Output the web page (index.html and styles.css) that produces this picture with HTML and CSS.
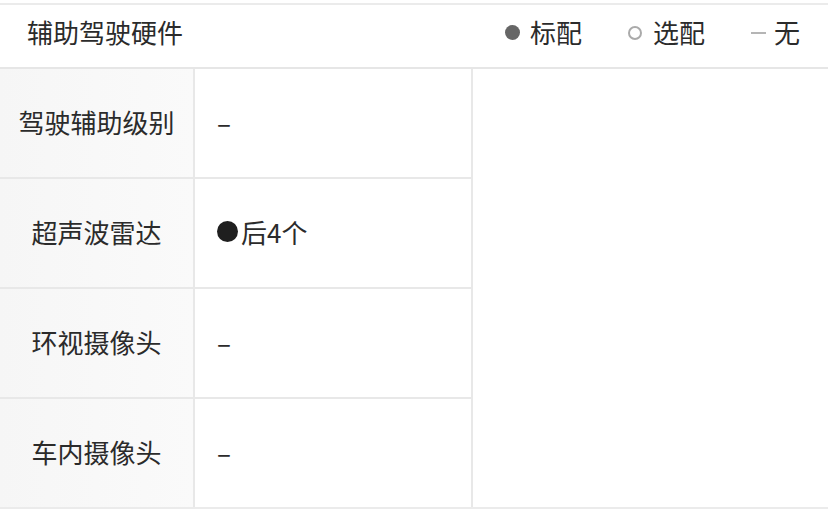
FILE: index.html
```html
<!DOCTYPE html>
<html lang="zh">
<head>
<meta charset="utf-8">
<link rel="stylesheet" href="styles.css">
</head>
<body>
<div class="page">
  <div class="header">
    <div class="title">辅助驾驶硬件</div>
    <div class="legend">
      <span class="item"><span class="dot-std"></span>标配</span>
      <span class="item"><span class="dot-opt"></span>选配</span>
      <span class="item"><span class="dash-none"></span>无</span>
    </div>
  </div>
  <div class="body">
    <div class="table">
      <div class="row"><div class="label">驾驶辅助级别</div><div class="value">–</div></div>
      <div class="row"><div class="label">超声波雷达</div><div class="value"><span class="bullet"></span>后4个</div></div>
      <div class="row"><div class="label">环视摄像头</div><div class="value">–</div></div>
      <div class="row last"><div class="label">车内摄像头</div><div class="value">–</div></div>
    </div>
  </div>
</div>
</body>
</html>
```

FILE: styles.css
```css
html, body {
  margin: 0;
  padding: 0;
  background: #fff;
}
body {
  font-family: "Noto Sans CJK SC", "Noto Sans", sans-serif;
  color: #2b2b2b;
  width: 828px;
  height: 518px;
  overflow: hidden;
}
.page {
  padding-top: 3px;
}
.header {
  border-top: 2px solid #ebebeb;
  border-bottom: 2px solid #e6e6e6;
  height: 62px;
  display: flex;
  align-items: center;
  justify-content: space-between;
  padding: 0 28px 0 27px;
  box-sizing: content-box;
}
.title {
  font-size: 26px;
  line-height: 1;
  margin-top: -9px;
}
.legend {
  display: flex;
  align-items: center;
  font-size: 26px;
  line-height: 1;
  margin-top: -9px;
}
.item {
  display: flex;
  align-items: center;
  margin-left: 46px;
}
.item:first-child { margin-left: 0; }
.dot-std {
  flex: none;
  width: 15px;
  height: 15px;
  border-radius: 50%;
  background: #666;
  margin-right: 10px;
  margin-top: 2px;
}
.dot-opt {
  flex: none;
  width: 14px;
  height: 14px;
  box-sizing: border-box;
  border-radius: 50%;
  border: 2px solid #aaa;
  margin-right: 11px;
  margin-top: 2px;
}
.dash-none {
  flex: none;
  width: 15px;
  height: 2px;
  background: #b5b5b5;
  margin-right: 8px;
  margin-top: 2px;
}
.body {
  border-bottom: 2px solid #ebebeb;
  display: flex;
}
.table {
  width: 471px;
  border-right: 2px solid #e8e8e8;
}
.row {
  display: flex;
  height: 108px;
  border-bottom: 2px solid #e8e8e8;
}
.row.last { border-bottom: none; }
.label {
  width: 195px;
  flex: none;
  background: linear-gradient(90deg, #f6f6f6, #fafafa);
  border-right: 2px solid #e8e8e8;
  display: flex;
  align-items: center;
  justify-content: center;
  font-size: 26px;
  color: #2b2b2b;
  padding-bottom: 4px;
  box-sizing: border-box;
}
.value {
  flex: 1;
  display: flex;
  align-items: center;
  padding-left: 22px;
  padding-bottom: 4px;
  font-size: 26px;
  color: #2b2b2b;
}
.bullet {
  flex: none;
  width: 21px;
  height: 21px;
  border-radius: 50%;
  background: #1f1f1f;
  margin-right: 3px;
}
```
